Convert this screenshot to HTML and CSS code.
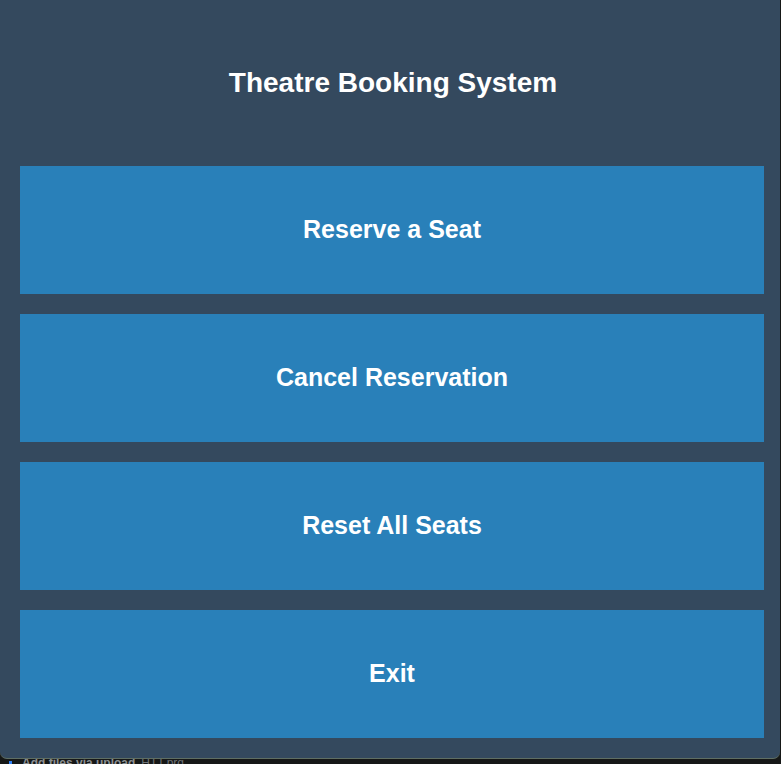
FILE: index.html
```html
<!DOCTYPE html>
<html lang="en">
<head>
<meta charset="utf-8">
<title>Theatre Booking System</title>
<link rel="stylesheet" href="styles.css">
</head>
<body>
<div class="window">
  <h1 class="title">Theatre Booking System</h1>
  <div class="menu">
    <button class="btn">Reserve a Seat</button>
    <button class="btn">Cancel Reservation</button>
    <button class="btn">Reset All Seats</button>
    <button class="btn">Exit</button>
  </div>
</div>
<div class="strip">
  <span class="dot"></span>
  <span class="commit">Add files via upload</span>
  <span class="hash">HTT.prq</span>
</div>
</body>
</html>
```
FILE: styles.css
```css
html, body {
  margin: 0;
  padding: 0;
  background: #161817;
  font-family: "Liberation Sans", Arial, sans-serif;
}
.window {
  height: 759px;
  box-sizing: border-box;
  background: #34495e;
  border-radius: 0 0 7px 7px;
  border-bottom: 1px solid #5f6e63;
  margin-right: 1px;
  display: flex;
  flex-direction: column;
}
.title {
  margin: 0;
  height: 166px;
  box-sizing: border-box;
  padding: 67px 0 0 6px;
  text-align: center;
  color: #ffffff;
  font-size: 28px;
  font-weight: bold;
  line-height: 32px;
}
.menu {
  display: flex;
  flex-direction: column;
  gap: 20px;
  padding: 0 16px 0 20px;
}
.btn {
  height: 128px;
  border: none;
  margin: 0;
  padding: 0 0 2px;
  background: #2980b9;
  color: #ffffff;
  font-family: "Liberation Sans", Arial, sans-serif;
  font-size: 25px;
  font-weight: bold;
}
.strip {
  height: 5px;
  overflow: hidden;
  display: flex;
  align-items: flex-start;
  gap: 6px;
  padding-left: 9px;
  font-size: 12px;
  font-weight: bold;
  line-height: 12px;
}
.dot {
  width: 3px;
  height: 3px;
  margin-top: 2px;
  background: #2f81f7;
  display: block;
}
.commit {
  color: #8b8f92;
  margin-left: 4px;
  margin-top: -2px;
}
.hash {
  color: #6e7276;
  font-weight: normal;
  margin-top: -2px;
}
```
